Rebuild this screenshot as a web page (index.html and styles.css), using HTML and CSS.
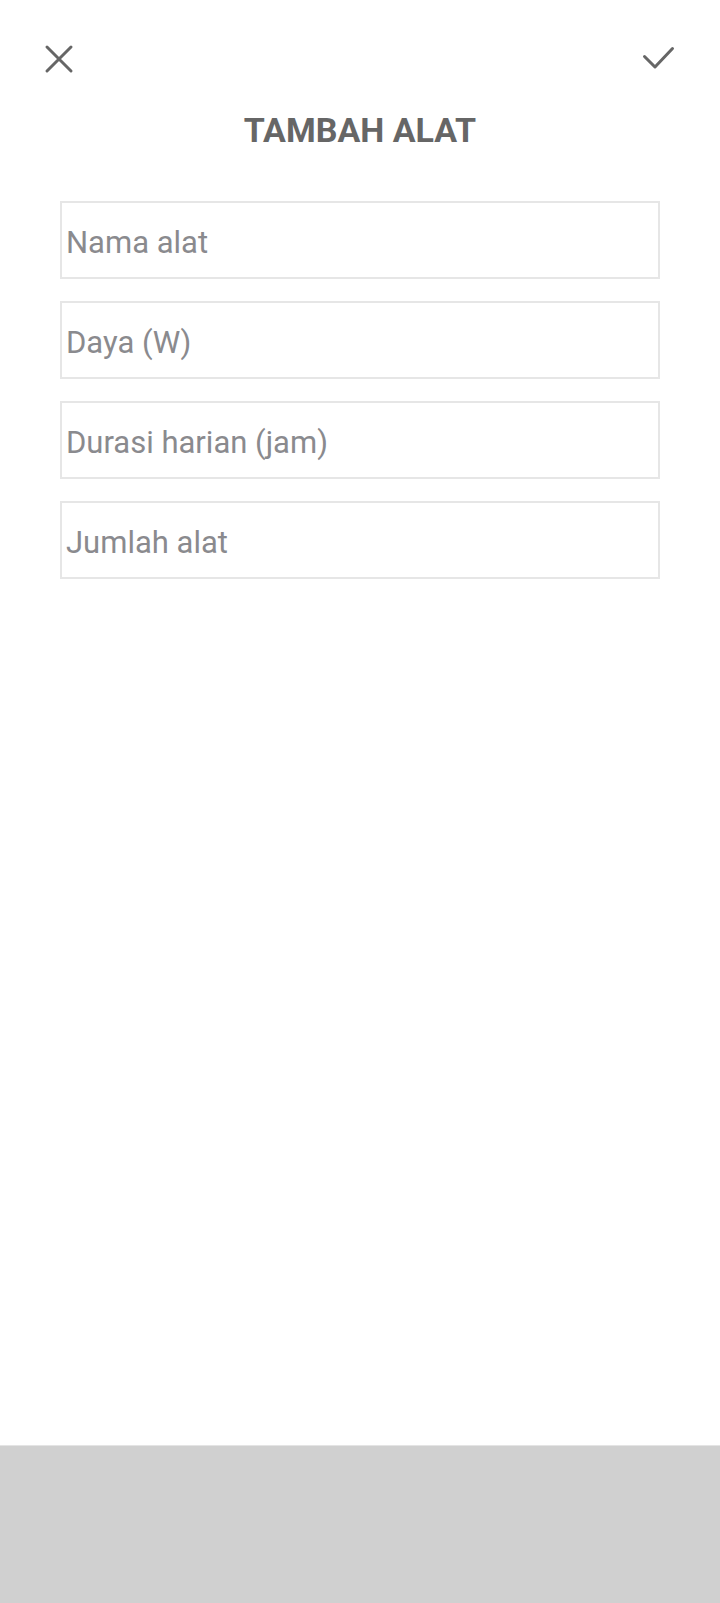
FILE: index.html
```html
<!DOCTYPE html>
<html lang="id">
<head>
    <meta charset="UTF-8">
    <meta name="viewport" content="width=device-width, initial-scale=1.0">
    <title>Tambah Alat</title>
    <link rel="stylesheet" href="styles.css">
</head>
<body>

    <div class="screen">
        <div class="toolbar">
            <button type="button" class="icon-btn" aria-label="Tutup">
                <svg viewBox="0 0 48 48" width="48" height="48">
                    <path d="M12 12 L36 36 M36 12 L12 36" stroke="#666" stroke-width="3" fill="none" stroke-linecap="round"/>
                </svg>
            </button>
            <button type="button" class="icon-btn" aria-label="Simpan">
                <svg viewBox="0 0 48 48" width="48" height="48">
                    <path d="M9.5 21.5 L20 32 L37.5 13.5" stroke="#666" stroke-width="3" fill="none" stroke-linecap="round" stroke-linejoin="round"/>
                </svg>
            </button>
        </div>

        <h1 class="title">TAMBAH ALAT</h1>

        <form class="form" id="tambahAlat">
            <input type="text" class="field" placeholder="Nama alat">
            <input type="text" class="field" placeholder="Daya (W)">
            <input type="text" class="field" placeholder="Durasi harian (jam)">
            <input type="text" class="field" placeholder="Jumlah alat">
        </form>

        <div class="spacer"></div>

        <div class="bottom-panel"></div>
    </div>

</body>
</html>
```

FILE: styles.css
```css
body {
    margin: 0;
    background-color: #ffffff;
    font-family: Roboto, 'Liberation Sans', sans-serif;
}

.screen {
    display: flex;
    flex-direction: column;
    height: 1603px;
}

.toolbar {
    display: flex;
    justify-content: space-between;
    align-items: center;
    padding: 35px 37px 0 35px;
}

.icon-btn {
    width: 48px;
    height: 48px;
    padding: 0;
    border: none;
    background: none;
    cursor: pointer;
}

.icon-btn svg {
    display: block;
}

.title {
    margin: 27px 0 0;
    text-align: center;
    font-size: 34px;
    font-weight: 700;
    color: #666666;
}

.form {
    display: flex;
    flex-direction: column;
    gap: 22px;
    margin: 51px 60px 0;
}

.field {
    box-sizing: border-box;
    height: 78px;
    padding: 4px 5px 0 4px;
    border: 2px solid #e6e6e6;
    border-radius: 0;
    font-family: Roboto, 'Liberation Sans', sans-serif;
    font-size: 31px;
    color: #444444;
    outline: none;
}

.field::placeholder {
    color: #8a8a8e;
}

.spacer {
    flex: 1;
}

.bottom-panel {
    height: 157px;
    background-color: #d0d0d0;
    border-top: 1px solid #e4e4e4;
}
```
